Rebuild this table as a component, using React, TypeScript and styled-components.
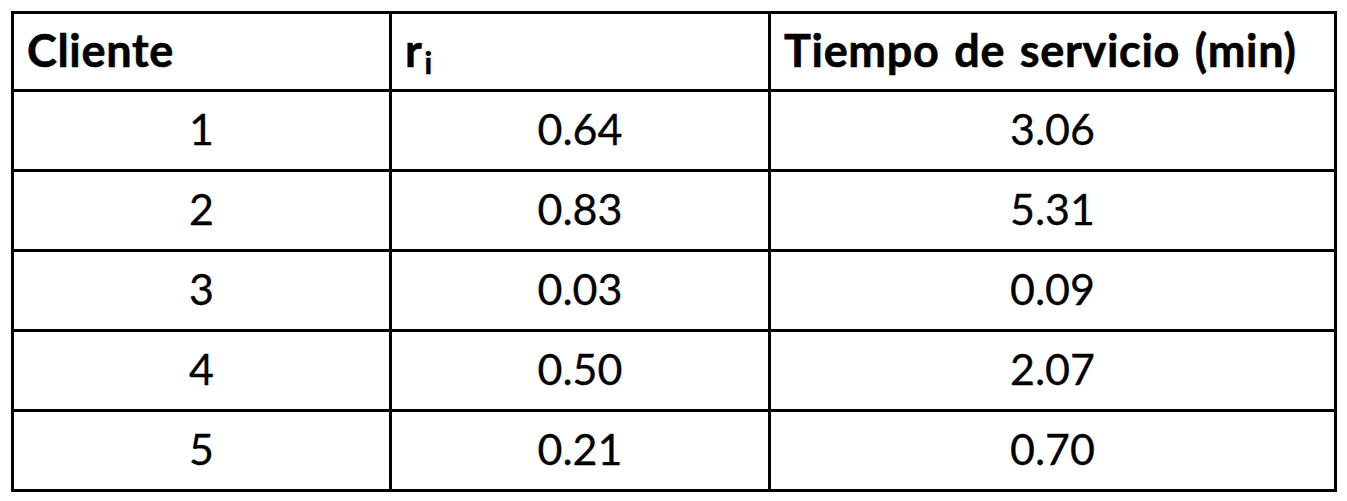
import React from "react";
import { styled, createGlobalStyle } from "styled-components";

const rows = [
  { client: 1, r: "0.64", time: "3.06" },
  { client: 2, r: "0.83", time: "5.31" },
  { client: 3, r: "0.03", time: "0.09" },
  { client: 4, r: "0.50", time: "2.07" },
  { client: 5, r: "0.21", time: "0.70" },
];

const App: React.FC = () => {
  return (
    <>
      <GlobalStyle />
      <Page>
        <Table>
          <HeadCell>Cliente</HeadCell>
          <HeadCell>
            r<Sub>i</Sub>
          </HeadCell>
          <HeadCell>Tiempo de servicio (min)</HeadCell>
          {rows.map((row) => (
            <React.Fragment key={row.client}>
              <Cell>{row.client}</Cell>
              <Cell>{row.r}</Cell>
              <Cell>{row.time}</Cell>
            </React.Fragment>
          ))}
        </Table>
      </Page>
    </>
  );
};

const GlobalStyle = createGlobalStyle`
  body {
    margin: 0;
    background: #fff;
    font-family: Lato, "Open Sans", sans-serif;
    color: #000;
  }
`;

const Page = styled.div`
  padding: 11px 0 0 11px;
`;

const Table = styled.div`
  display: grid;
  grid-template-columns: 375px 376px 563px;
  grid-template-rows: 75px repeat(5, 77px);
  gap: 3px;
  padding: 3px;
  width: fit-content;
  background: #000;
`;

const HeadCell = styled.div`
  background: #fff;
  display: flex;
  align-items: center;
  padding: 0 0 4px 13px;
  font-size: 45px;
  font-weight: 700;
  letter-spacing: 0.7px;
  word-spacing: 3px;
  -webkit-text-stroke: 0.6px #000;
`;

const Sub = styled.span`
  font-size: 30px;
  position: relative;
  top: 12px;
  margin-left: 2px;
`;

const Cell = styled.div`
  background: #fff;
  display: flex;
  align-items: center;
  justify-content: center;
  padding-bottom: 4px;
  font-size: 43px;
  font-weight: 400;
  -webkit-text-stroke: 0.3px #000;
`;

export default App;
